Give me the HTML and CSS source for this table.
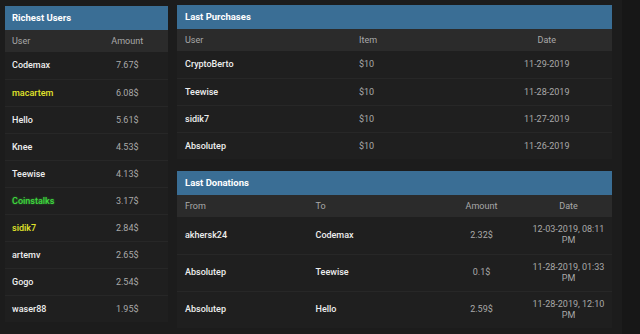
FILE: index.html
```html
<!DOCTYPE html>
<html lang="en">
<head>
  <meta charset="UTF-8"/>
  <title>Stats</title>
  <link rel="stylesheet" href="styles.css">
</head>
<body>
  <div class="page">

    <!-- Richest users -->
    <div class="card card-rich">
      <div class="card-title">Richest Users</div>
      <table class="list">
        <colgroup><col class="w50"><col class="w50"></colgroup>
        <thead>
          <tr><th>User</th><th class="center">Amount</th></tr>
        </thead>
        <tbody>
          <tr><td class="name">Codemax</td><td class="num center">7.67$</td></tr>
          <tr><td class="name vip">macartem</td><td class="num center">6.08$</td></tr>
          <tr><td class="name">Hello</td><td class="num center">5.61$</td></tr>
          <tr><td class="name">Knee</td><td class="num center">4.53$</td></tr>
          <tr><td class="name">Teewise</td><td class="num center">4.13$</td></tr>
          <tr><td class="name glow">Coinstalks</td><td class="num center">3.17$</td></tr>
          <tr><td class="name vip">sidik7</td><td class="num center">2.84$</td></tr>
          <tr><td class="name">artemv</td><td class="num center">2.65$</td></tr>
          <tr><td class="name">Gogo</td><td class="num center">2.54$</td></tr>
          <tr><td class="name">waser88</td><td class="num center">1.95$</td></tr>
        </tbody>
      </table>
    </div>

    <div class="side">
      <!-- Last purchases -->
      <div class="card">
        <div class="card-title">Last Purchases</div>
        <table class="list">
          <colgroup><col class="w40"><col class="w30"><col class="w30"></colgroup>
          <thead>
            <tr><th>User</th><th>Item</th><th class="center">Date</th></tr>
          </thead>
          <tbody>
            <tr><td class="name">CryptoBerto</td><td class="num">$10</td><td class="num center">11-29-2019</td></tr>
            <tr><td class="name">Teewise</td><td class="num">$10</td><td class="num center">11-28-2019</td></tr>
            <tr><td class="name">sidik7</td><td class="num">$10</td><td class="num center">11-27-2019</td></tr>
            <tr><td class="name">Absolutep</td><td class="num">$10</td><td class="num center">11-26-2019</td></tr>
          </tbody>
        </table>
      </div>

      <!-- Last donations -->
      <div class="card">
        <div class="card-title">Last Donations</div>
        <table class="list tall">
          <colgroup><col class="w30"><col class="w30"><col class="w20"><col class="w20"></colgroup>
          <thead>
            <tr><th>From</th><th>To</th><th class="center">Amount</th><th class="center">Date</th></tr>
          </thead>
          <tbody>
            <tr><td class="name">akhersk24</td><td class="name">Codemax</td><td class="num center">2.32$</td><td class="num center">12-03-2019, 08:11 PM</td></tr>
            <tr><td class="name">Absolutep</td><td class="name">Teewise</td><td class="num center">0.1$</td><td class="num center">11-28-2019, 01:33 PM</td></tr>
            <tr><td class="name">Absolutep</td><td class="name">Hello</td><td class="num center">2.59$</td><td class="num center">11-28-2019, 12:10 PM</td></tr>
          </tbody>
        </table>
      </div>
    </div>

  </div>
</body>
</html>
```

FILE: styles.css
```css
:root {
  --page: #1c1c1c;
  --edge: #171717;
  --card: #1f1f1f;
  --head: #2b2b2b;
  --line: #272727;
  --blue: #3a6e95;
  --text: #eeeeee;
  --muted: #a9a9a9;
}
* { margin:0; padding:0; box-sizing:border-box }
html { background:var(--edge) }
body {
  font-family:Roboto, 'Liberation Sans', sans-serif;
  font-size:9px;
  color:var(--text);
  width:622px; min-height:334px;
  background:var(--page);
}

.page {
  display:grid; grid-template-columns:163px 435px;
  column-gap:9px; padding:5px 0 0 5px;
  align-items:start;
}
.card-rich { margin-top:1px }
.side { display:flex; flex-direction:column; gap:12px }

/* Card */
.card { background:var(--card) }
.card-title {
  background:var(--blue); color:#fff;
  height:24px; line-height:24px;
  padding:0 7px; font-weight:700; font-size:9.5px;
}
.side .card-title { padding:0 8px }

/* Tables */
.list { width:100%; border-collapse:collapse; table-layout:fixed }
.w50 { width:50% }
.w40 { width:40% }
.w30 { width:30% }
.w20 { width:20% }
.list th {
  background:var(--head); color:var(--muted);
  font-weight:400; text-align:left;
  height:22px; padding:0 7px;
}
.list td {
  height:27px; padding:0 7px;
  border-top:1px solid var(--line);
}
.side .list th, .side .list td { padding:0 8px }
.list tbody tr:first-child td { border-top:none }
.tall td { height:37px; line-height:11px }
.list .center { text-align:center }
.side .list .center { padding:0 4px }

.name { font-weight:500; color:var(--text) }
.num { color:var(--muted) }
.vip { color:#e2e62b }
.glow { color:#3fd73f; text-shadow:0 0 2px rgba(60,220,60,.6) }
```
